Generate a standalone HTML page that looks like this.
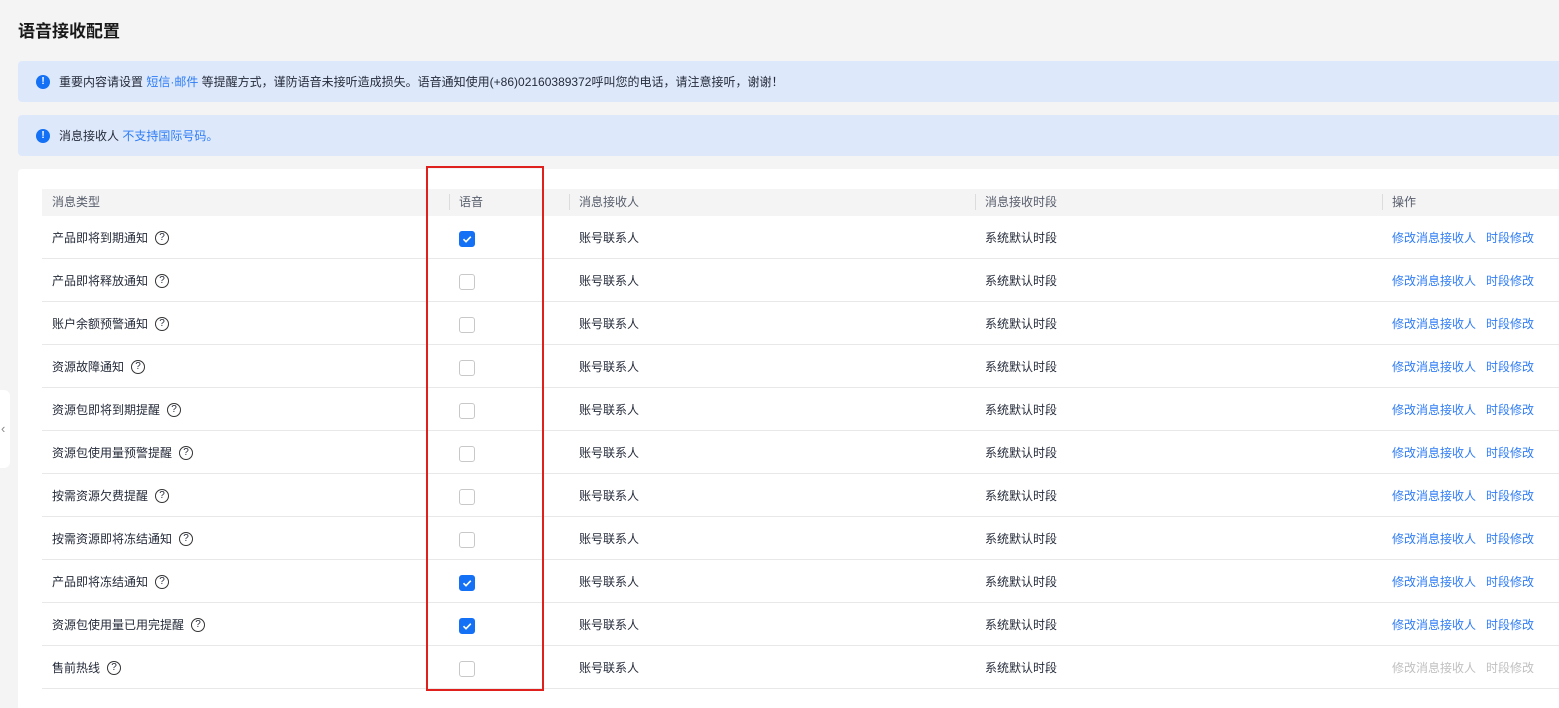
<!DOCTYPE html>
<html><head><meta charset="utf-8"><style>
*{box-sizing:border-box;margin:0;padding:0}
body{width:1559px;height:708px;overflow:hidden;background:#f4f4f4;font-family:"Liberation Sans","Noto Sans CJK SC",sans-serif;font-size:12px;color:#252b3a;position:relative}
.title{position:absolute;left:18px;top:17px;font-size:17px;font-weight:bold;color:#191919}
.alert{position:absolute;left:18px;right:0;height:41px;background:#dde9fb;border-radius:4px 0 0 4px;display:flex;align-items:center;padding-left:18px;font-size:12px}
.alert .i{width:14px;height:14px;border-radius:50%;background:#1470f5;color:#fff;font-size:10px;font-weight:bold;display:flex;align-items:center;justify-content:center;margin-right:9px}
.a{color:#2e7cf6}
.card{position:absolute;left:18px;top:169px;right:0;bottom:0;background:#fff;border-radius:4px 0 0 0}
.hd{position:absolute;left:42px;right:0;top:189px;height:27px;background:#f4f4f4;color:#575d6c}
.cell{position:absolute;white-space:nowrap;display:flex;align-items:center;height:16px}
.sep{position:absolute;top:194px;width:1px;height:16px;background:#dcdcdc}
.row{position:absolute;left:42px;right:0;height:43px;border-bottom:1px solid #e8e8e8}
.q{display:inline-flex;align-items:center;justify-content:center;width:14px;height:14px;border:1px solid #333;border-radius:50%;font-size:10px;margin-left:7px;margin-top:1px}
.cb{position:absolute;left:459px;width:16px;height:16px;border:1px solid #c8c8c8;border-radius:3px;background:#fff}
.cb.on{background:#1470f5;border-color:#1470f5}
.red{position:absolute;left:426px;top:166px;width:118px;height:525px;border:2px solid #e0201c}
.tab{position:absolute;left:0;top:390px;width:10px;height:78px;background:#fff;border-radius:0 6px 6px 0;color:#888;font-size:13px;line-height:78px;padding-left:1px}
.dis{color:#c0c0c0}
</style></head><body>
<div class="title">语音接收配置</div>
<div class="alert" style="top:61px"><span class="i">!</span>重要内容请设置&nbsp;<span class="a">短信·邮件</span>&nbsp;等提醒方式，谨防语音未接听造成损失。语音通知使用(+86)02160389372呼叫您的电话，请注意接听，谢谢！</div>
<div class="alert" style="top:115px"><span class="i">!</span>消息接收人&nbsp;<span class="a">不支持国际号码。</span></div>
<div class="card"></div>
<div class="tab">‹</div>
<div class="hd"></div>
<div class="cell" style="left:52px;top:193px;color:#575d6c">消息类型</div>
<div class="sep" style="left:449px"></div><div class="cell" style="left:459px;top:193px;color:#575d6c">语音</div>
<div class="sep" style="left:569px"></div><div class="cell" style="left:579px;top:193px;color:#575d6c">消息接收人</div>
<div class="sep" style="left:975px"></div><div class="cell" style="left:985px;top:193px;color:#575d6c">消息接收时段</div>
<div class="sep" style="left:1382px"></div><div class="cell" style="left:1392px;top:193px;color:#575d6c">操作</div>
<div id="rows"></div>
<script>
var d=[["产品即将到期通知",1],["产品即将释放通知",0],["账户余额预警通知",0],["资源故障通知",0],["资源包即将到期提醒",0],["资源包使用量预警提醒",0],["按需资源欠费提醒",0],["按需资源即将冻结通知",0],["产品即将冻结通知",1],["资源包使用量已用完提醒",1],["售前热线",0]];
var h="";d.forEach(function(r,i){var t=216+i*43,c=t+13;
h+='<div class="row" style="top:'+t+'px"></div>';
h+='<div class="cell" style="left:52px;top:'+c+'px">'+r[0]+'<span class="q">?</span></div>';
h+='<div class="cb'+(r[1]?' on':'')+'" style="top:'+(t+15)+'px">'+(r[1]?'<svg width="14" height="14" viewBox="0 0 14 14"><path d="M3.5 7.2l2.5 2.5 4.8-5" stroke="#fff" stroke-width="1.6" fill="none"/></svg>':'')+'</div>';
h+='<div class="cell" style="left:579px;top:'+c+'px">账号联系人</div>';
h+='<div class="cell" style="left:985px;top:'+c+'px">系统默认时段</div>';
var cl=i==10?'dis':'a';
h+='<div class="cell '+cl+'" style="left:1392px;top:'+c+'px">修改消息接收人&nbsp;&nbsp;&nbsp;时段修改</div>';});
document.getElementById("rows").innerHTML=h;
</script>
<div class="red"></div>
</body></html>
